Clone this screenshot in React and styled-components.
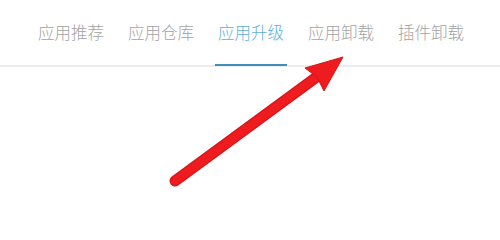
import React from "react";
import styled, { createGlobalStyle } from "styled-components";

const Global = createGlobalStyle`
  html, body { margin: 0; padding: 0; background: #fff; }
  body { font-family: "Noto Sans CJK SC", "Noto Sans", sans-serif; }
`;

const Page = styled.div`
  position: relative;
  width: 500px;
  height: 210px;
  background: #fff;
  overflow: hidden;
`;

const TabBar = styled.nav`
  display: flex;
  align-items: flex-start;
  gap: 18px;
  height: 65px;
  padding-left: 35px;
  border-bottom: 2px solid #ececec;
`;

const Tab = styled.div`
  box-sizing: border-box;
  height: 66px;
  padding: 0 3px 1px;
  display: flex;
  align-items: center;
  font-size: 16.5px;
  font-weight: 300;
  color: ${(p) => (p.$active ? "#5eb0d4" : "#a3a3a3")};
  border-bottom: 2px solid ${(p) => (p.$active ? "#3d8fb8" : "transparent")};
  white-space: nowrap;
`;

const Arrow = styled.svg`
  position: absolute;
  left: 0;
  top: 0;
`;

const tabs = ["应用推荐", "应用仓库", "应用升级", "应用卸载", "插件卸载"];

export default function App() {
  return (
    <Page>
      <Global />
      <TabBar>
        {tabs.map((t, i) => (
          <Tab key={t} $active={i === 2}>
            {t}
          </Tab>
        ))}
      </TabBar>
      <Arrow width="500" height="210" viewBox="0 0 500 210">
        <line
          x1="175"
          y1="181"
          x2="318"
          y2="76"
          stroke="#d8141a"
          strokeWidth="11"
          strokeLinecap="round"
        />
        <line
          x1="175"
          y1="181"
          x2="318"
          y2="76"
          stroke="#ee1c1f"
          strokeWidth="8.5"
          strokeLinecap="round"
        />
        <polygon
          points="343,57 305,68 317,77 324,91"
          fill="#ee1c1f"
          stroke="#d8141a"
          strokeWidth="1"
          strokeLinejoin="round"
        />
      </Arrow>
    </Page>
  );
}
